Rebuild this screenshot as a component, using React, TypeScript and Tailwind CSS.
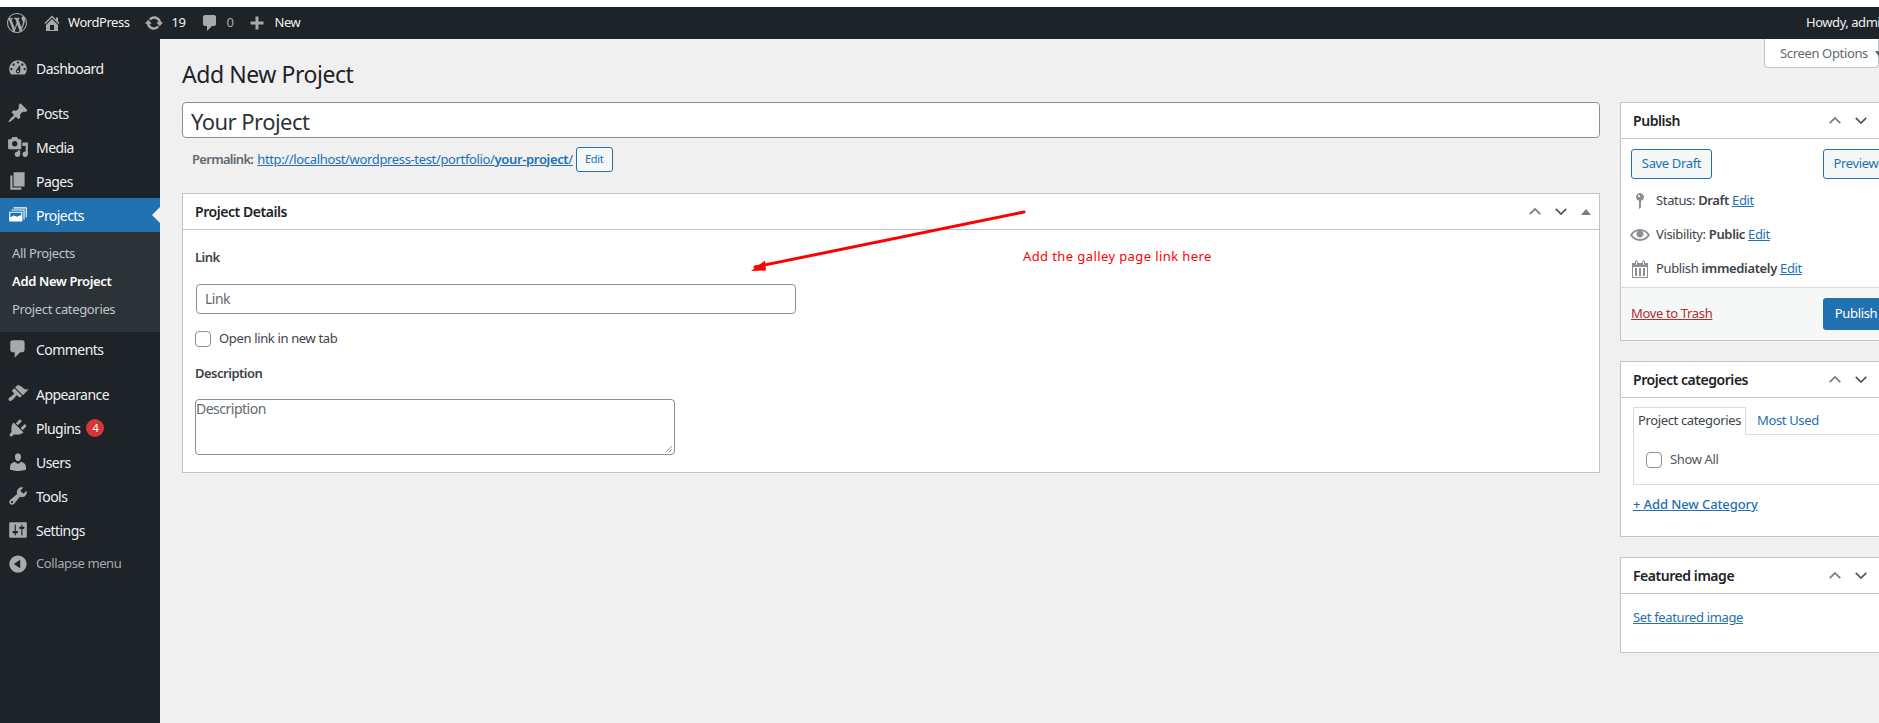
import React from "react";

const P: Record<string, string> = {
  wp: "M20 10c0-5.51-4.49-10-10-10C4.48 0 0 4.49 0 10c0 5.52 4.48 10 10 10 5.51 0 10-4.48 10-10zM7.78 15.37L4.37 6.22c.55-.02 1.17-.08 1.17-.08.5-.06.44-1.13-.06-1.11 0 0-1.45.11-2.37.11-.18 0-.37 0-.58-.01C4.12 2.69 6.87 1.11 10 1.11c2.33 0 4.45.87 6.05 2.34-.68-.11-1.65.39-1.65 1.58 0 .74.45 1.36.9 2.1.35.61.55 1.36.55 2.46 0 1.49-1.4 5-1.4 5l-3.03-8.37c.54-.02.82-.17.82-.17.5-.05.44-1.25-.06-1.22 0 0-1.44.12-2.38.12-.87 0-2.33-.12-2.33-.12-.5-.03-.56 1.2-.06 1.22l.92.08 1.26 3.41zM17.41 10c.24-.64.74-1.87.43-4.25.7 1.29 1.05 2.71 1.05 4.25 0 3.29-1.73 6.24-4.4 7.78.97-2.59 1.94-5.2 2.92-7.78zM6.1 18.09C3.12 16.65 1.11 13.53 1.11 10c0-1.3.23-2.48.72-3.59C3.25 10.3 4.67 14.2 6.1 18.09zm4.03-6.63l2.58 6.98c-.86.29-1.76.45-2.71.45-.79 0-1.57-.11-2.29-.33.81-2.38 1.62-4.74 2.42-7.1z",
  home: "M16 8.5l1.53 1.53-1.06 1.06L10 4.62l-6.47 6.47-1.06-1.06L10 2.5l4 4v-2h2v4zm-6-2.46l6 5.99V18H4v-5.97zM12 17v-5H8v5h4z",
  update: "M10.2 3.28c3.53 0 6.43 2.61 6.92 6h2.08l-3.5 4-3.5-4h2.32c-.45-1.97-2.21-3.45-4.32-3.45-1.45 0-2.73.71-3.54 1.78L4.95 5.66C6.23 4.2 8.11 3.28 10.2 3.28zm-.4 13.44c-3.52 0-6.43-2.61-6.92-6H.8l3.5-4c1.17 1.33 2.33 2.67 3.5 4H5.48c.45 1.97 2.21 3.45 4.32 3.45 1.45 0 2.73-.71 3.54-1.78l1.71 1.95c-1.28 1.46-3.15 2.38-5.25 2.38z",
  comment: "M5 2h9c1.1 0 2 .9 2 2v7c0 1.1-.9 2-2 2h-2l-5 5v-5H5c-1.1 0-2-.9-2-2V4c0-1.1.9-2 2-2z",
  plus: "M16.5 8.5v3h-5v5h-3v-5h-5v-3h5v-5h3v5h5z",
  dashboard: "M3.76 16h12.48c1.1-1.37 1.76-3.11 1.76-5 0-4.42-3.58-8-8-8s-8 3.58-8 8c0 1.89.66 3.63 1.76 5zM10 4c.55 0 1 .45 1 1s-.45 1-1 1-1-.45-1-1 .45-1 1-1zM6 6c.55 0 1 .45 1 1s-.45 1-1 1-1-.45-1-1 .45-1 1-1zm8 0c.55 0 1 .45 1 1s-.45 1-1 1-1-.45-1-1 .45-1 1-1zm-5.37 5.55L12 7v6c0 1.1-.9 2-2 2s-2-.9-2-2c0-.57.24-1.08.63-1.45zM4 10c.55 0 1 .45 1 1s-.45 1-1 1-1-.45-1-1 .45-1 1-1zm12 0c.55 0 1 .45 1 1s-.45 1-1 1-1-.45-1-1 .45-1 1-1zm-5 3c0-.55-.45-1-1-1s-1 .45-1 1 .45 1 1 1 1-.45 1-1z",
  pin: "M10.44 3.02l1.82-1.82 6.36 6.35-1.83 1.82c-1.05-.68-2.48-.57-3.41.36l-.75.75c-.92.93-1.04 2.35-.35 3.41l-1.83 1.82-2.41-2.41-2.8 2.79c-.42.42-3.38 2.71-3.8 2.29s1.86-3.39 2.28-3.81l2.79-2.79L4.1 9.36l1.83-1.82c1.05.69 2.48.57 3.4-.36l.75-.75c.93-.92 1.05-2.35.36-3.41z",
  media: "M13 11V4c0-.55-.45-1-1-1h-1.67L9 1H5L3.67 3H2c-.55 0-1 .45-1 1v7c0 .55.45 1 1 1h10c.55 0 1-.45 1-1zM7 4.5c1.38 0 2.5 1.12 2.5 2.5S8.38 9.5 7 9.5 4.5 8.38 4.5 7 5.62 4.5 7 4.5zM14 6h5v10.5c0 1.38-1.12 2.5-2.5 2.5S14 17.88 14 16.5s1.12-2.5 2.5-2.5c.17 0 .34.02.5.05V9h-3V6zm-4 8.05V13h2v3.5c0 1.38-1.12 2.5-2.5 2.5S7 17.88 7 16.5 8.12 14 9.5 14c.17 0 .34.02.5.05z",
  pages: "M6 15V2h10v13H6zm-1 1h8v2H3V5h2v11z",
  projects: "M6 3h12v9h-1V4H6V3zM4 5h12v9h-1V6H4V5zM2 7h12v9H2V7zm1 1v4l3-1.5 3 1 4-1.5V8H3z",
  appearance: "M14.48 11.06L7.41 3.99l1.5-1.5c.5-.56 2.3-.47 3.51.32 1.21.8 1.43 1.28 2.91 2.1 1.18.64 2.45 1.26 4.45.85zm-.71.71L6.7 4.7 4.93 6.47c-.39.39-.39 1.02 0 1.41l1.06 1.06c.39.39.39 1.03 0 1.42-.6.6-1.43 1.11-2.21 1.69-.35.26-.7.53-1.01.84C1.43 13.23.96 15.1 1.73 15.88c.77.77 2.65.3 3.99-1.04.31-.31.58-.66.84-1.01.58-.78 1.09-1.61 1.69-2.21.39-.39 1.03-.39 1.42 0l1.06 1.06c.39.39 1.02.39 1.41 0z",
  plugins: "M13.11 4.36L9.87 7.6 8 5.73l3.24-3.24c.35-.34 1.05-.2 1.56.32.52.51.66 1.21.31 1.55zm-8 1.77l.91-1.12 9.01 9.01-1.19.84c-.71.71-2.63 1.16-3.82 1.16H6.14L4.9 17.26c-.59.59-1.54.59-2.12 0-.59-.58-.59-1.53 0-2.12l1.24-1.24v-3.88c0-1.13.4-3.19 1.09-3.89zm7.26 3.97l3.24-3.24c.34-.35 1.04-.21 1.55.31.52.51.66 1.21.31 1.55l-3.24 3.25z",
  users: "M10 9.25c-2.27 0-2.73-3.44-2.73-3.44C7 4.02 7.82 2 9.97 2c2.16 0 2.98 2.02 2.71 3.81 0 0-.41 3.44-2.68 3.44zm0 2.57L12.72 10c2.39 0 4.52 2.33 4.52 4.53v2.49s-3.65 1.13-7.24 1.13c-3.65 0-7.24-1.13-7.24-1.13v-2.49c0-2.25 1.94-4.48 4.47-4.48z",
  tools: "M16.68 9.77c-1.34 1.34-3.3 1.67-4.95.99l-5.41 6.52c-.99.99-2.59.99-3.58 0s-.99-2.59 0-3.57l6.52-5.42c-.68-1.65-.35-3.61.99-4.95 1.28-1.28 3.12-1.62 4.72-1.06l-2.89 2.89 2.82 2.82 2.86-2.87c.53 1.58.18 3.39-1.08 4.65zM3.81 16.21c.4.39 1.04.39 1.43 0 .4-.4.4-1.04 0-1.43-.39-.4-1.03-.4-1.43 0-.39.39-.39 1.03 0 1.43z",
  settings: "M18 16V4c0-.55-.45-1-1-1H3c-.55 0-1 .45-1 1v12c0 .55.45 1 1 1h14c.55 0 1-.45 1-1zM8 11h1c.55 0 1 .45 1 1s-.45 1-1 1H8v1.5c0 .28-.22.5-.5.5s-.5-.22-.5-.5V13H6c-.55 0-1-.45-1-1s.45-1 1-1h1V5.5c0-.28.22-.5.5-.5s.5.22.5.5V11zm5-2h-1c-.55 0-1-.45-1-1s.45-1 1-1h1V5.5c0-.28.22-.5.5-.5s.5.22.5.5V7h1c.55 0 1 .45 1 1s-.45 1-1 1h-1v5.5c0 .28-.22.5-.5.5s-.5-.22-.5-.5V9z",
  collapse: "M10 2.16c4.33 0 7.84 3.51 7.84 7.84s-3.51 7.84-7.84 7.84S2.16 14.33 2.16 10 5.71 2.16 10 2.16zm2 11.72V6.12L6.18 9.97z",
  status: "M14 6c0 1.86-1.28 3.41-3 3.86V16c0 1-2 2-2 2V9.86c-1.72-.45-3-2-3-3.86 0-2.21 1.79-4 4-4s4 1.79 4 4zM8 5c0 .55.45 1 1 1s1-.45 1-1-.45-1-1-1-1 .45-1 1z",
  eye: "M19.7 9.4C17.7 6 14 3.9 10 3.9S2.3 6 .3 9.4L0 10l.3.6c2 3.4 5.7 5.5 9.7 5.5s7.7-2.1 9.7-5.5l.3-.6-.3-.6zM10 14.1c-3.1 0-6-1.6-7.7-4.1C3.6 8 5.7 6.6 8 6.1c-.9.6-1.5 1.7-1.5 2.9 0 1.9 1.6 3.5 3.5 3.5s3.5-1.6 3.5-3.5c0-1.2-.6-2.3-1.5-2.9 2.3.5 4.4 1.9 5.7 3.9-1.7 2.5-4.6 4.1-7.7 4.1z",
  calendar: "M15 4h3v15H2V4h3V3c0-.41.15-.76.44-1.06.29-.29.65-.44 1.06-.44s.77.15 1.06.44c.29.3.44.65.44 1.06v1h4V3c0-.41.15-.76.44-1.06.29-.29.65-.44 1.06-.44s.77.15 1.06.44c.29.3.44.65.44 1.06v1zM6 3v2.5c0 .14.05.26.15.36.09.09.21.14.35.14s.26-.05.35-.14c.1-.1.15-.22.15-.36V3c0-.14-.05-.26-.15-.35-.09-.1-.21-.15-.35-.15s-.26.05-.35.15c-.1.09-.15.21-.15.35zm7 0v2.5c0 .14.05.26.14.36.1.09.22.14.36.14s.26-.05.36-.14c.09-.1.14-.22.14-.36V3c0-.14-.05-.26-.14-.35-.1-.1-.22-.15-.36-.15s-.26.05-.36.15c-.09.09-.14.21-.14.35zm4 15V8H3v10h14zM5 9h2v8H5V9zm4 0h2v8H9V9zm4 0h2v8h-2V9z",
};

function Dash({ n, className }: { n: string; className: string }) {
  return (
    <svg viewBox="0 0 20 20" fill="currentColor" className={"shrink-0 " + className} aria-hidden="true">
      <path d={P[n]} />
    </svg>
  );
}

function Chev({ up, className }: { up?: boolean; className?: string }) {
  return (
    <svg viewBox="0 0 16 10" fill="none" stroke="currentColor" strokeWidth="2" className={"w-[14px] h-[9px] shrink-0 " + (className ?? "")} aria-hidden="true">
      <path d={up ? "M2 8l6-6 6 6" : "M2 2l6 6 6-6"} />
    </svg>
  );
}

function Row({ icon, label, active, badge, muted, mt }: { icon: string; label: string; active?: boolean; badge?: string; muted?: boolean; mt?: string }) {
  return (
    <div className={"relative h-[34px] flex items-center shrink-0 " + (active ? "bg-[#2271b1] " : "") + (mt ?? "")}>
      <div className="w-[36px] pl-[7px] shrink-0">
        <Dash n={icon} className={"w-[22px] h-[22px] " + (active ? "text-white" : "text-[#a7aaad]")} />
      </div>
      <span className={muted ? "text-[13px] tracking-[-0.4px] text-[#a7aaad]" : active ? "text-[14px] tracking-[-0.55px] text-white" : "text-[14px] tracking-[-0.55px] text-[#f0f0f1]"}>{label}</span>
      {badge && (
        <span className="ml-[6px] w-[18px] h-[18px] rounded-full bg-[#d63638] text-white text-[11px] flex items-center justify-center">{badge}</span>
      )}
      {active && (
        <span className="absolute right-0 top-1/2 -translate-y-1/2 w-0 h-0 border-y-[8px] border-y-transparent border-r-[8px] border-r-[#f0f0f1]" />
      )}
    </div>
  );
}

function Box({ title, children, className }: { title: string; children: React.ReactNode; className?: string }) {
  return (
    <div className={"bg-white border border-[#c3c4c7] " + (className ?? "")}>
      <div className="h-[35px] box-content flex items-center justify-between border-b border-[#c3c4c7] pl-[12px] pr-[7px]">
        <span className="text-[14px] font-semibold tracking-[-0.45px] text-[#1d2327]">{title}</span>
        <div className="flex items-center">
          <Chev up className="text-[#787c82]" />
          <Chev className="text-[#50575e] ml-[12px]" />
          <span className="ml-[13px] mr-[1px] w-0 h-0 border-x-[5px] border-x-transparent border-b-[6px] border-b-[#787c82]" />
        </div>
      </div>
      {children}
    </div>
  );
}

const link = "text-[#2271b1] underline";

export default function App() {
  return (
    <div className="w-[1879px] h-[723px] overflow-hidden bg-white flex flex-col text-[13px] tracking-[-0.35px] text-[#3c434a] font-['Noto_Sans','Open_Sans',sans-serif]">
      <div className="h-[7px] shrink-0 bg-white" />
      <header className="h-[32px] shrink-0 bg-[#1d2327] flex items-center text-[#f0f0f1] text-[13px] tracking-[-0.45px] relative">
        <Dash n="wp" className="w-[20px] h-[20px] ml-[7px] text-[#a7aaad]" />
        <Dash n="home" className="w-[20px] h-[20px] ml-[15px] text-[#a7aaad]" />
        <span className="ml-[6px]">WordPress</span>
        <Dash n="update" className="w-[20px] h-[20px] ml-[14px] text-[#a7aaad]" />
        <span className="ml-[8px]">19</span>
        <Dash n="comment" className="w-[20px] h-[20px] ml-[14px] text-[#a7aaad]" />
        <span className="ml-[7px] text-[#a7aaad]">0</span>
        <Dash n="plus" className="w-[20px] h-[20px] ml-[13px] text-[#a7aaad]" />
        <span className="ml-[8px]">New</span>
        <span className="ml-auto w-[73px] shrink-0 whitespace-nowrap">Howdy, admin</span>
      </header>
      <div className="flex flex-1 min-h-0">
        <aside className="w-[160px] shrink-0 bg-[#1d2327] pt-[12px] flex flex-col">
          <Row icon="dashboard" label="Dashboard" />
          <Row icon="pin" label="Posts" mt="mt-[11px]" />
          <Row icon="media" label="Media" />
          <Row icon="pages" label="Pages" />
          <Row icon="projects" label="Projects" active />
          <div className="h-[100px] shrink-0 bg-[#2c3338] pt-[8px] text-[13px] text-[#c3c4c7]">
            <div className="h-[28px] flex items-center pl-[12px]">All Projects</div>
            <div className="h-[28px] flex items-center pl-[12px] font-semibold text-white">Add New Project</div>
            <div className="h-[28px] flex items-center pl-[12px]">Project categories</div>
          </div>
          <Row icon="comment" label="Comments" />
          <Row icon="appearance" label="Appearance" mt="mt-[11px]" />
          <Row icon="plugins" label="Plugins" badge="4" />
          <Row icon="users" label="Users" />
          <Row icon="tools" label="Tools" />
          <Row icon="settings" label="Settings" />
          <Row icon="collapse" label="Collapse menu" muted />
        </aside>
        <main className="flex-1 min-w-0 bg-[#f0f0f1] pl-[22px] relative">
          <div className="absolute right-0 top-0 w-[115px] h-[29px] bg-white border border-t-0 border-[#c3c4c7] rounded-b-[4px] flex items-center pl-[15px] pt-[1px] text-[#646970] whitespace-nowrap">
            Screen Options
            <span className="ml-[7px] w-0 h-0 border-x-[4px] border-x-transparent border-t-[6px] border-t-[#646970]" />
          </div>
          <h1 className="h-[63px] pt-[17px] text-[23px] leading-[36px] tracking-[-0.45px] text-[#1d2327]">Add New Project</h1>
          <div className="flex">
            <div className="w-[1418px] shrink-0">
              <div className="h-[36px] bg-white border border-[#8c8f94] rounded-[4px] flex items-center pl-[8px] pt-[2px] text-[22px] tracking-[-0.55px] text-[#2c3338]">Your Project</div>
              <div className="h-[25px] mt-[9px] pl-[10px] flex items-center text-[#646970]">
                <span className="font-semibold tracking-[-0.7px]">Permalink:</span>
                <a className={link + " ml-[4px]"}>http://localhost/wordpress-test/portfolio/<b className="font-semibold">your-project</b>/</a>
                <span className="ml-[3px] h-[25px] w-[37px] flex items-center justify-center bg-[#f6f7f7] border border-[#2271b1] rounded-[3px] text-[#2271b1] text-[11px]">Edit</span>
              </div>
              <Box title="Project Details" className="mt-[21px] h-[280px] relative">
                <div className="pl-[12px] pt-[18px]">
                  <div className="font-semibold tracking-[-0.5px] leading-[18px]">Link</div>
                  <div className="mt-[18px] ml-[1px] w-[600px] h-[30px] border border-[#8c8f94] rounded-[4px] flex items-center pl-[8px] pb-[1px] text-[14px] tracking-[-0.5px] text-[#646970]">Link</div>
                  <div className="mt-[17px] flex items-center h-[16px]">
                    <span className="w-[16px] h-[16px] border border-[#8c8f94] rounded-[4px] bg-white" />
                    <span className="ml-[8px] pb-[1px]">Open link in new tab</span>
                  </div>
                  <div className="mt-[17px] font-semibold tracking-[-0.5px] leading-[18px]">Description</div>
                  <div className="mt-[17px] relative w-[480px] h-[56px] border border-[#8c8f94] rounded-[4px] text-[14px] tracking-[-0.5px] leading-[18px] text-[#646970]">
                    Description
                    <svg viewBox="0 0 10 10" className="absolute right-[1px] bottom-[1px] w-[8px] h-[8px] text-[#767676]" stroke="currentColor" aria-hidden="true"><path d="M9 1L1 9M9 5L5 9" /></svg>
                  </div>
                </div>
              </Box>
            </div>
            <div className="w-[280px] ml-[20px] shrink-0 flex flex-col">
              <Box title="Publish" className="h-[239px] flex flex-col">
                <div className="flex justify-between px-[10px] pt-[10px]">
                  <span className="w-[81px] h-[30px] flex items-center justify-center bg-[#f6f7f7] border border-[#2271b1] rounded-[3px] text-[#2271b1]">Save Draft</span>
                  <span className="w-[66px] h-[30px] flex items-center justify-center bg-[#f6f7f7] border border-[#2271b1] rounded-[3px] text-[#2271b1]">Preview</span>
                </div>
                <div className="pl-[10px] pt-[5px]">
                  <div className="h-[34px] flex items-center">
                    <span className="w-[18px] flex justify-center"><Dash n="status" className="w-[20px] h-[20px] text-[#8c8f94]" /></span>
                    <span className="ml-[7px]">Status: <b className="font-semibold">Draft</b> <a className={link}>Edit</a></span>
                  </div>
                  <div className="h-[34px] flex items-center">
                    <span className="w-[18px] flex justify-center"><Dash n="eye" className="w-[20px] h-[20px] text-[#8c8f94]" /></span>
                    <span className="ml-[7px]">Visibility: <b className="font-semibold">Public</b> <a className={link}>Edit</a></span>
                  </div>
                  <div className="h-[34px] flex items-center">
                    <span className="w-[18px] flex justify-center"><Dash n="calendar" className="w-[20px] h-[20px] text-[#8c8f94]" /></span>
                    <span className="ml-[7px]">Publish <b className="font-semibold">immediately</b> <a className={link}>Edit</a></span>
                  </div>
                </div>
                <div className="mt-auto h-[53px] bg-[#f6f7f7] border-t border-[#dcdcde] flex items-center justify-between pl-[10px] pr-[10px]">
                  <a className="text-[#b32d2e] underline">Move to Trash</a>
                  <span className="w-[66px] h-[32px] bg-[#2271b1] rounded-[3px] text-white flex items-center justify-center">Publish</span>
                </div>
              </Box>
              <Box title="Project categories" className="mt-[20px] h-[176px]">
                <div className="px-[12px] pt-[9px]">
                  <div className="flex h-[28px] items-end border-b border-[#dcdcde] relative">
                    <span className="h-[28px] w-[113px] border border-b-0 border-[#dcdcde] bg-white flex items-center justify-center pb-[1px] text-[#3c434a] relative top-[1px]">Project categories</span>
                    <span className="h-[27px] flex items-center ml-[11px] text-[#2271b1]">Most Used</span>
                  </div>
                  <div className="h-[50px] border border-t-0 border-[#dcdcde] flex items-center pl-[12px] pt-[1px] mr-[-40px]">
                    <span className="w-[16px] h-[16px] border border-[#8c8f94] rounded-[4px] bg-white" />
                    <span className="ml-[8px] text-[#50575e]">Show All</span>
                  </div>
                  <a className={link + " block mt-[10px] font-medium tracking-[-0.1px]"}>+ Add New Category</a>
                </div>
              </Box>
              <Box title="Featured image" className="mt-[20px] h-[96px]">
                <div className="pl-[12px] pt-[14px]">
                  <a className={link}>Set featured image</a>
                </div>
              </Box>
            </div>
          </div>
          <svg className="absolute left-[560px] top-[160px] w-[320px] h-[90px] text-[#ff0000] pointer-events-none" viewBox="0 0 320 90" aria-hidden="true">
            <path d="M304 13L35 68" stroke="currentColor" strokeWidth="3" strokeLinecap="round" fill="none" />
            <path d="M31 72L45 61.5L46 71.5Z" fill="currentColor" />
          </svg>
          <div className="absolute left-[863px] top-[207px] text-[13px] leading-[20px] tracking-[0.4px] text-[#ff0000] whitespace-nowrap">Add the galley page link here</div>
        </main>
      </div>
    </div>
  );
}
